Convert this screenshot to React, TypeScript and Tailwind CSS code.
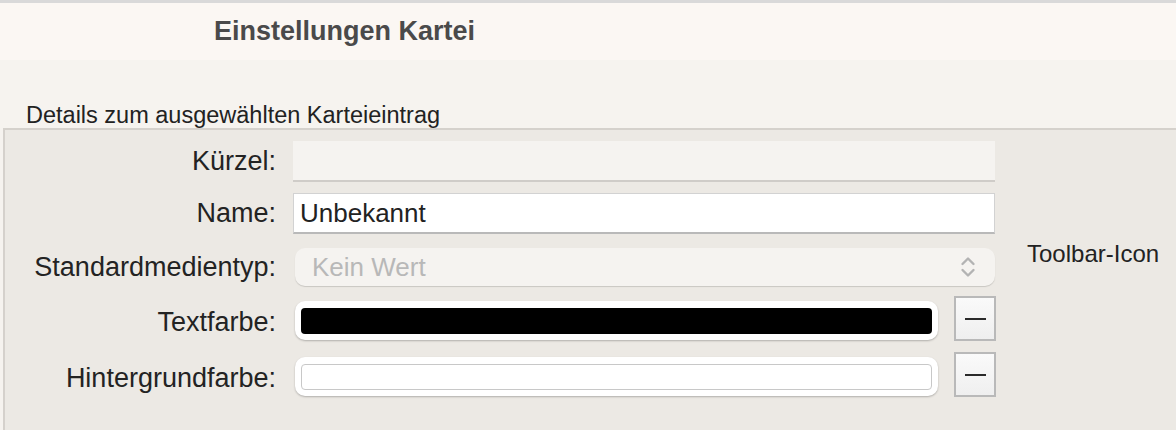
import React from "react";

const labelCls =
  "w-[271px] shrink-0 text-right text-[27px] leading-none text-[#232323]";

const MinusButton = () => (
  <button className="ml-[16px] flex h-[45px] w-[42px] items-center justify-center border-2 border-[#b9b9b9] bg-gradient-to-b from-[#fafafa] to-[#efefef]">
    <span className="block h-[2px] w-[21px] bg-[#2a2a2a]" />
  </button>
);

const ColorWell = ({ color }: { color: "black" | "white" }) => (
  <div className="ml-[19px] mt-[4px] flex h-[39px] w-[643px] items-center rounded-[10px] bg-white px-[6px] shadow-[0_1px_2px_rgba(0,0,0,0.25)]">
    {color === "black" ? (
      <div className="h-[26px] w-full rounded-[4px] bg-black" />
    ) : (
      <div className="h-[26px] w-full rounded-[4px] border border-[#c8c8c8] bg-white" />
    )}
  </div>
);

export default function App() {
  return (
    <div
      className="h-[430px] w-[1176px] overflow-hidden bg-[#f6f3ef]"
      style={{ fontFamily: '"Liberation Sans", Arial, sans-serif' }}
    >
      {/* window chrome leftover */}
      <div className="h-[3px] bg-[#d9d9d9]" />

      {/* title */}
      <div className="flex h-[57px] items-center bg-[#fbf7f3] pl-[214px]">
        <h1 className="text-[27px] font-bold leading-none text-[#4a4a4a]">Einstellungen Kartei</h1>
      </div>

      <div className="flex h-[68px] items-end pb-[1px] pl-[26px]">
        <p className="text-[23.5px] leading-none text-[#222]">Details zum ausgewählten Karteieintrag</p>
      </div>

      {/* group box */}
      <div className="ml-[3px] h-[302px] border-l-2 border-t-2 border-[#d5d1cc] bg-[#ece9e4] pt-[11px]">
        <div className="flex h-[41px] items-center">
          <span className={labelCls}>Kürzel:</span>
          <div className="ml-[17px] h-[41px] w-[702px] border-b-2 border-[#cfccc8] bg-[#f5f3f0]" />
        </div>

        <div className="mt-[11px] flex h-[41px] items-center">
          <span className={labelCls}>Name:</span>
          <div className="ml-[17px] flex h-[41px] w-[702px] items-center border border-[#d2d2d2] border-b-2 border-b-[#b9b9b9] bg-white pl-[6px] text-[26px] text-[#222]">
            Unbekannt
          </div>
        </div>

        <div className="mt-[14px] flex h-[38px] items-center">
          <span className={labelCls}>Standardmedientyp:</span>
          <div className="ml-[19px] flex h-[38px] w-[700px] items-center justify-between rounded-[10px] bg-[#f5f3f0] pl-[17px] pr-[19px] shadow-[0_1px_1px_rgba(0,0,0,0.15)]">
            <span className="text-[26px] text-[#b8b8b8]">Kein Wert</span>
            <svg width="16" height="24" viewBox="0 0 16 24" fill="none" stroke="#b3b3b3" strokeWidth="2.4" strokeLinecap="round" strokeLinejoin="round">
              <path d="M2.5 9 L8 3.5 L13.5 9" />
              <path d="M2.5 15 L8 20.5 L13.5 15" />
            </svg>
          </div>
          <span className="-mt-[6px] ml-[32px] self-start text-[24px] leading-none text-[#222]">Toolbar-Icon</span>
        </div>

        <div className="mt-[10px] flex h-[45px] items-center">
          <span className={`${labelCls} mt-[7px]`}>Textfarbe:</span>
          <ColorWell color="black" />
          <MinusButton />
        </div>

        <div className="mt-[11px] flex h-[45px] items-center">
          <span className={`${labelCls} mt-[7px]`}>Hintergrundfarbe:</span>
          <ColorWell color="white" />
          <MinusButton />
        </div>
      </div>
    </div>
  );
}
